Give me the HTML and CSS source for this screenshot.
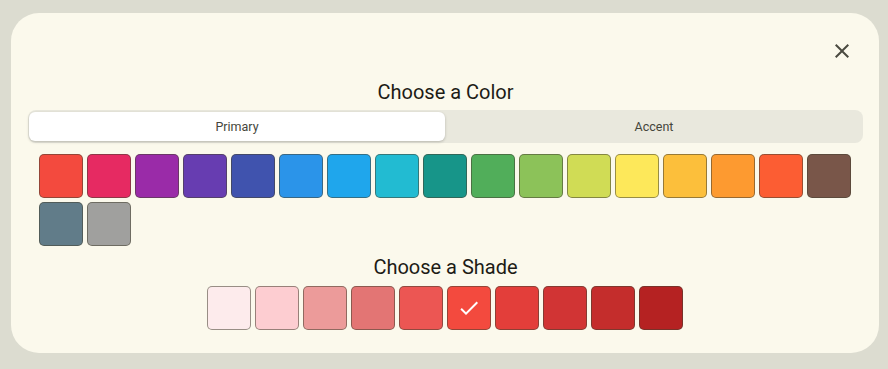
FILE: index.html
```html
<!DOCTYPE html>
<html lang="en">

<head>
    <meta charset="UTF-8">
    <meta name="viewport" content="width=device-width, initial-scale=1.0">
    <title>Color Picker</title>
    <link rel="stylesheet" href="styles.css">
</head>

<body>
    <main class="dialog">
        <header class="dialog-head">
            <button class="close" aria-label="close">
                <svg viewBox="0 0 24 24" width="24" height="24">
                    <path d="M19 6.41L17.59 5 12 10.59 6.41 5 5 6.41 10.59 12 5 17.59 6.41 19 12 13.41 17.59 19 19 17.59 13.41 12z" />
                </svg>
            </button>
        </header>

        <h2 class="title">Choose a Color</h2>

        <nav class="tabs">
            <button class="tab is-active">Primary</button>
            <button class="tab">Accent</button>
        </nav>

        <div class="swatches">
            <button class="swatch" style="background:#f34a3e"></button>
            <button class="swatch" style="background:#e62a62"></button>
            <button class="swatch" style="background:#9a2ba8"></button>
            <button class="swatch" style="background:#673db1"></button>
            <button class="swatch" style="background:#4053ae"></button>
            <button class="swatch" style="background:#2b94e9"></button>
            <button class="swatch" style="background:#1fa6ec"></button>
            <button class="swatch" style="background:#22bbd2"></button>
            <button class="swatch" style="background:#179589"></button>
            <button class="swatch" style="background:#51ae5a"></button>
            <button class="swatch" style="background:#8cc259"></button>
            <button class="swatch" style="background:#d0dc55"></button>
            <button class="swatch" style="background:#fde85a"></button>
            <button class="swatch" style="background:#fcbf3b"></button>
            <button class="swatch" style="background:#fd9a30"></button>
            <button class="swatch" style="background:#fc5d33"></button>
            <button class="swatch" style="background:#795649"></button>
            <button class="swatch" style="background:#617c89"></button>
            <button class="swatch" style="background:#a0a09e"></button>
        </div>

        <h2 class="title is-shade">Choose a Shade</h2>

        <div class="shades">
            <button class="swatch" style="background:#fdebec"></button>
            <button class="swatch" style="background:#fdcdd1"></button>
            <button class="swatch" style="background:#ec9b9a"></button>
            <button class="swatch" style="background:#e37574"></button>
            <button class="swatch" style="background:#ec5653"></button>
            <button class="swatch is-selected" style="background:#f34a3e">
                <svg viewBox="0 0 24 24" width="24" height="24">
                    <path d="M9 16.17L4.83 12l-1.42 1.41L9 19 21 7l-1.41-1.41z" />
                </svg>
            </button>
            <button class="swatch" style="background:#e33e3a"></button>
            <button class="swatch" style="background:#d13434"></button>
            <button class="swatch" style="background:#c42d2c"></button>
            <button class="swatch" style="background:#b52222"></button>
        </div>
    </main>
</body>

</html>
```

FILE: styles.css
```css
*,
*::before,
*::after {
    box-sizing: border-box;
    margin: 0;
    padding: 0;
}

body {
    font-family: Roboto, 'Liberation Sans', sans-serif;
    background: #dcdcd0;
    min-height: 100vh;
    padding: 13px 9px 0 11px;
    color: #1d1c16;
}

.dialog {
    background: #fbf9ec;
    border-radius: 28px;
    width: 868px;
    height: 340px;
    padding: 18px 16px 0 17px;
    display: flex;
    flex-direction: column;
}

.dialog-head {
    display: flex;
    justify-content: flex-end;
    height: 40px;
    padding-right: 1px;

    & .close {
        width: 40px;
        height: 40px;
        border: 0;
        background: transparent;
        display: grid;
        place-content: center;
        cursor: pointer;

        & svg {
            fill: #4a4a40;
        }
    }
}

.title {
    font-size: 20px;
    font-weight: 400;
    line-height: 28px;
    text-align: center;
    margin-top: 7px;

    &.is-shade {
        margin-top: 7px;
    }
}

.tabs {
    display: flex;
    gap: 1px;
    background: #e9e8dd;
    border-radius: 8px;
    padding: 2px 1px;
    margin-top: 4px;

    & .tab {
        flex: 1;
        height: 29px;
        border: 0;
        border-radius: 6px;
        background: transparent;
        font-family: inherit;
        font-size: 12.5px;
        color: #45463c;
        cursor: pointer;

        &.is-active {
            background: #fff;
            box-shadow: 0 1px 3px rgba(0, 0, 0, 0.22);
        }
    }
}

.swatches {
    display: flex;
    flex-wrap: wrap;
    gap: 4px;
    padding: 0 11px;
    margin-top: 11px;
}

.shades {
    display: flex;
    justify-content: center;
    gap: 4px;
    padding-right: 1px;
    margin-top: 5px;
}

.swatch {
    width: 44px;
    height: 44px;
    border: 1px solid rgba(70, 65, 50, 0.55);
    border-radius: 5px;
    cursor: pointer;
    display: grid;
    place-content: center;

    & svg {
        fill: #fff;
    }
}
```
